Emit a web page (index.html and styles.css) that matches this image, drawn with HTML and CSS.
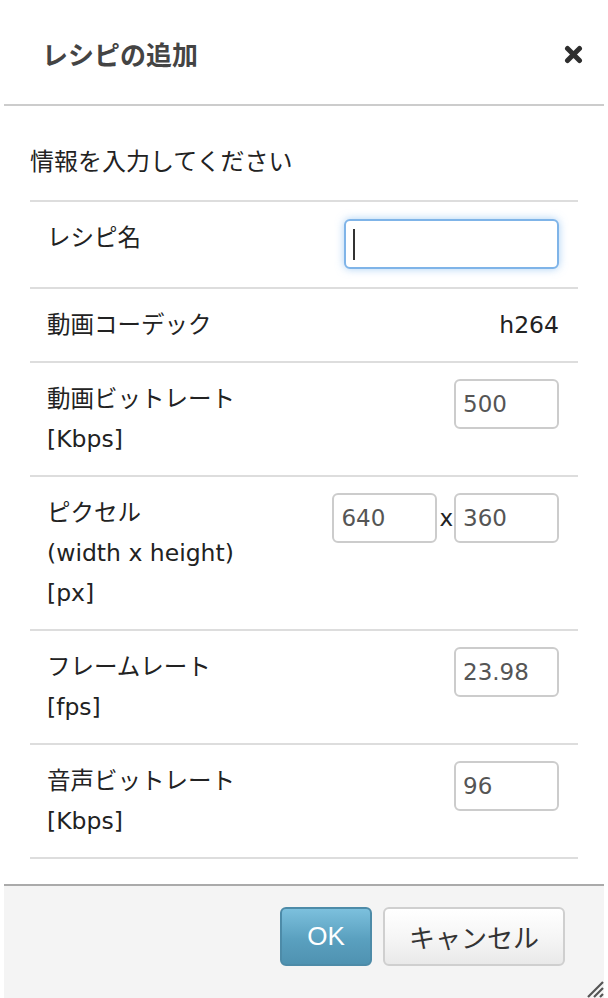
FILE: index.html
```html
<!DOCTYPE html>
<html lang="ja">
<head>
<meta charset="utf-8">
<title>レシピの追加</title>
<link rel="stylesheet" href="styles.css">
</head>
<body>
<div class="dialog">
  <div class="header">
    <h1 class="title">レシピの追加</h1>
    <svg class="close" width="19" height="19" viewBox="0 0 19 19" aria-label="閉じる">
      <path d="M3.5 3.5 L15.5 15.5 M15.5 3.5 L3.5 15.5" stroke="#2e2e2e" stroke-width="5" stroke-linecap="round"/>
    </svg>
  </div>
  <div class="content">
    <p class="intro">情報を入力してください</p>
    <div class="table">
      <div class="row row-name">
        <div class="label">レシピ名</div>
        <div class="field wide focused"><span class="caret"></span></div>
      </div>
      <div class="row">
        <div class="label">動画コーデック</div>
        <div class="value">h264</div>
      </div>
      <div class="row">
        <div class="label">動画ビットレート<br>[Kbps]</div>
        <div class="field">500</div>
      </div>
      <div class="row">
        <div class="label">ピクセル<br>(width x height)<br>[px]</div>
        <div class="pair">
          <div class="field">640</div>
          <span class="times">x</span>
          <div class="field">360</div>
        </div>
      </div>
      <div class="row">
        <div class="label">フレームレート<br>[fps]</div>
        <div class="field">23.98</div>
      </div>
      <div class="row">
        <div class="label">音声ビットレート<br>[Kbps]</div>
        <div class="field">96</div>
      </div>
    </div>
  </div>
  <div class="footer">
    <button class="btn btn-ok">OK</button>
    <button class="btn btn-cancel">キャンセル</button>
    <svg class="grip" width="22" height="22" viewBox="0 0 22 22">
      <path d="M21 6 L6 21 M21 12 L12 21 M21 18 L18 21" stroke="#555" stroke-width="2.2"/>
    </svg>
  </div>
</div>
</body>
</html>
```
FILE: styles.css
```css
html, body {
  margin: 0;
  padding: 0;
  background: #ffffff;
}
body {
  font-family: "Liberation Sans", "Noto Sans CJK JP", sans-serif;
  color: #222;
}
.dialog {
  margin: 0 4px;
  height: 998px;
  display: flex;
  flex-direction: column;
}
.header {
  height: 106px;
  box-sizing: border-box;
  padding: 0 21px 0 38px;
  display: flex;
  align-items: center;
  justify-content: space-between;
  border-bottom: 2px solid #cccccc;
  flex: none;
}
.title {
  margin: 0;
  font-family: "Noto Sans CJK JP", sans-serif;
  font-size: 26px;
  font-weight: 700;
  line-height: 40px;
  color: #444;
  position: relative;
  top: 2px;
}
.close {
  display: block;
  position: relative;
  top: 2px;
}
.content {
  padding: 0 26px 0 26px;
  flex: 1;
}
.intro {
  margin: 0;
  padding: 34px 0 20px 0;
  font-family: "Noto Sans CJK JP", sans-serif;
  font-size: 24px;
  line-height: 40px;
  color: #222;
}
.table {
  border-bottom: 2px solid #dddddd;
}
.row {
  border-top: 2px solid #dddddd;
  padding: 16px 19px 16px 17px;
  display: flex;
  justify-content: space-between;
  align-items: flex-start;
}
.label,
.value {
  font-family: "DejaVu Sans", "Noto Sans CJK JP", sans-serif;
  font-size: 23.5px;
  line-height: 40px;
  color: #222;
}
.field {
  box-sizing: border-box;
  width: 105px;
  height: 50px;
  border: 2px solid #cccccc;
  border-radius: 6px;
  padding: 0 7px;
  font-family: "DejaVu Sans", Verdana, sans-serif;
  font-size: 23px;
  line-height: 46px;
  color: #555;
  background: #fff;
}
.field.wide {
  width: 215px;
  margin-top: 1px;
  margin-bottom: 2px;
  display: flex;
  align-items: center;
}
.field.focused {
  border-color: #7fb4e8;
  box-shadow: 0 0 9px rgba(102, 170, 235, 0.55);
}
.caret {
  display: block;
  width: 2px;
  height: 31px;
  background: #333;
}
.pair {
  display: flex;
  align-items: center;
}
.times {
  font-family: "DejaVu Sans", Verdana, sans-serif;
  font-size: 23px;
  color: #222;
  margin: 0 1px 0 2px;
  line-height: 46px;
}
.footer {
  flex: none;
  height: 114px;
  box-sizing: border-box;
  border-top: 2px solid #aaaaaa;
  background: #f4f4f4;
  padding: 21px 39px 0 0;
  display: flex;
  justify-content: flex-end;
  align-items: flex-start;
  gap: 11px;
  position: relative;
}
.btn {
  height: 59px;
  border-radius: 6px;
  font-size: 26px;
  font-family: "Liberation Sans", "Noto Sans CJK JP", sans-serif;
  cursor: pointer;
  padding: 0;
}
.btn-ok {
  width: 92px;
  color: #fff;
  border: 2px solid #4d8ba8;
  background: linear-gradient(#7cc0dd, #5aa0bf 55%, #4f92b1);
}
.btn-cancel {
  width: 182px;
  color: #333;
  border: 2px solid #cfcfcf;
  background: linear-gradient(#ffffff, #f6f6f6 50%, #e9e9e9);
}
.grip {
  position: absolute;
  right: 0;
  bottom: 0;
}
```
